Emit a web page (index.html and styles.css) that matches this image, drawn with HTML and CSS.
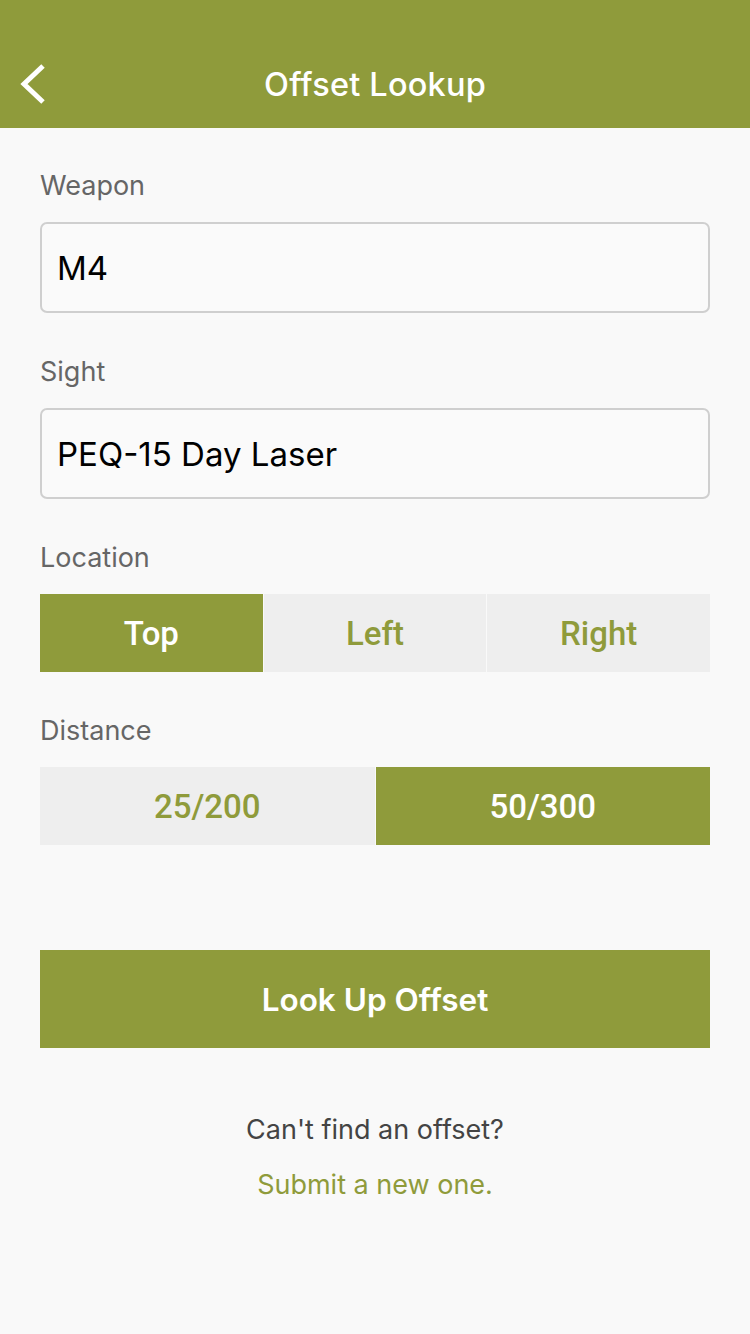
FILE: index.html
```html
<!DOCTYPE html>
<html>
<head>
<meta charset="utf-8">
<link rel="stylesheet" href="styles.css">
</head>
<body>
<header class="navbar">
  <button class="back" aria-label="Back">
    <svg width="30" height="42" viewBox="0 0 30 42"><path d="M25 3 L6 21 L25 39" fill="none" stroke="#fff" stroke-width="5" stroke-linecap="butt" stroke-linejoin="miter"/></svg>
  </button>
  <h1 class="title">Offset Lookup</h1>
</header>
<main class="content">
  <div class="field">
    <div class="label">Weapon</div>
    <div class="input">M4</div>
  </div>
  <div class="field">
    <div class="label">Sight</div>
    <div class="input">PEQ-15 Day Laser</div>
  </div>
  <div class="field">
    <div class="label">Location</div>
    <div class="segments">
      <div class="seg active">Top</div>
      <div class="seg">Left</div>
      <div class="seg">Right</div>
    </div>
  </div>
  <div class="field">
    <div class="label">Distance</div>
    <div class="segments">
      <div class="seg">25/200</div>
      <div class="seg active">50/300</div>
    </div>
  </div>
  <button class="primary">Look Up Offset</button>
  <p class="hint">Can't find an offset?</p>
  <p class="link">Submit a new one.</p>
</main>
</body>
</html>
```

FILE: styles.css
```css
html, body {
  margin: 0;
  padding: 0;
  background: #f9f9f9;
  font-family: Inter, "Open Sans", "Liberation Sans", sans-serif;
}
.navbar {
  position: relative;
  height: 88px;
  padding-top: 40px;
  background: #8f9b3b;
  display: flex;
  align-items: center;
  justify-content: center;
}
.back {
  position: absolute;
  left: 18px;
  top: 63px;
  background: none;
  border: 0;
  padding: 0;
  width: 30px;
  height: 42px;
}
.title {
  margin: 0;
  color: #fff;
  font-size: 32.5px;
  font-weight: 500;
  letter-spacing: 0.2px;
}
.content {
  padding: 40px 40px 0;
}
.field {
  margin-bottom: 41px;
}
.label {
  height: 36px;
  line-height: 36px;
  font-size: 27px;
  color: #666;
  margin-bottom: 18px;
}
.input {
  box-sizing: border-box;
  height: 91px;
  border: 2px solid #cfcfcf;
  border-radius: 7px;
  background: #fafafa;
  padding: 0 15px;
  display: flex;
  align-items: center;
  font-size: 33px;
  color: #000;
}
.segments {
  display: flex;
  gap: 1px;
  height: 78px;
  margin-top: 1px;
}
.seg {
  flex: 1;
  background: #eeeeee;
  color: #8f9b3b;
  display: flex;
  align-items: center;
  justify-content: center;
  font-family: Roboto, "Liberation Sans", sans-serif;
  font-weight: 500;
  font-size: 33px;
}
.seg.active {
  background: #8f9b3b;
  color: #fff;
}
.primary {
  display: block;
  width: 100%;
  height: 98px;
  margin-top: 105px;
  border: 0;
  background: #8f9b3b;
  color: #fff;
  font-family: Inter, "Open Sans", "Liberation Sans", sans-serif;
  font-size: 31.5px;
  font-weight: 600;
}
.hint {
  margin: 64px 0 0;
  text-align: center;
  font-size: 27px;
  line-height: 36px;
  color: #444;
}
.link {
  margin: 19px 0 0;
  text-align: center;
  font-size: 27px;
  line-height: 36px;
  color: #8f9b3b;
}
```
